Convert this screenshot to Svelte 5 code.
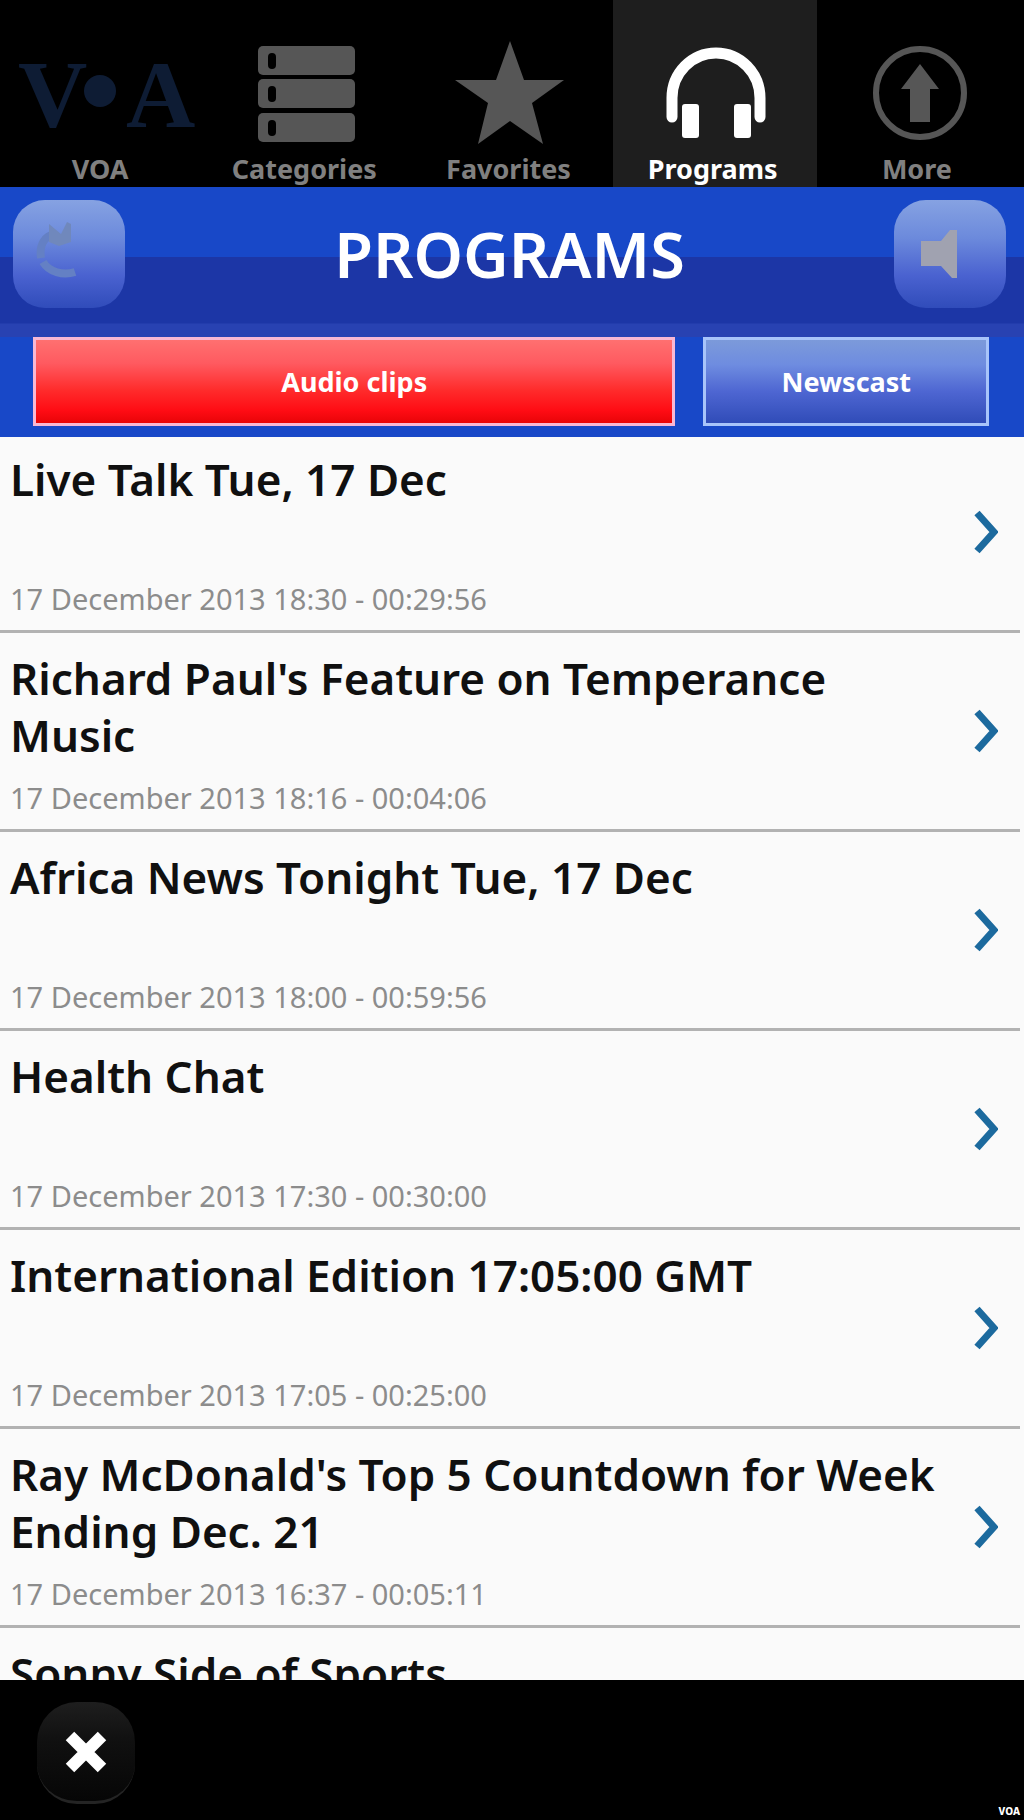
<script lang="ts">
	const tabs = ['VOA', 'Categories', 'Favorites', 'Programs', 'More']
	let active = $state('Programs')

	const filters = ['Audio clips', 'Newscast']
	let filter = $state('Audio clips')

	const clips = [
		{ title: 'Live Talk Tue, 17 Dec', meta: '17 December 2013 18:30 - 00:29:56' },
		{ title: "Richard Paul's Feature on Temperance Music", meta: '17 December 2013 18:16 - 00:04:06' },
		{ title: 'Africa News Tonight Tue, 17 Dec', meta: '17 December 2013 18:00 - 00:59:56' },
		{ title: 'Health Chat', meta: '17 December 2013 17:30 - 00:30:00' },
		{ title: 'International Edition 17:05:00 GMT', meta: '17 December 2013 17:05 - 00:25:00' },
		{ title: "Ray McDonald's Top 5 Countdown for Week Ending Dec. 21", meta: '17 December 2013 16:37 - 00:05:11' },
		{ title: 'Sonny Side of Sports', meta: '' }
	]
</script>

<svelte:head>
	<title>VOA Programs</title>
</svelte:head>

<div class="app">
	<nav>
		{#each tabs as tab}
			<button class="tab" class:active={active === tab} onclick={() => { active = tab }}>
				<svg viewBox="0 0 200 108" aria-hidden="true">
					{#if tab === 'VOA'}
						<g class="logo">
							<text x="16" y="87">V</text>
							<circle cx="98" cy="51" r="16" />
							<text x="124" y="87">A</text>
						</g>
					{:else if tab === 'Categories'}
						{#each [6, 39, 73] as y}
							<rect x="52" {y} width="97" height="29" rx="5" />
							<rect class="hole" x="62" y={y + 7} width="8" height="16" rx="4" />
						{/each}
					{:else if tab === 'Favorites'}
						<path d="M100 1L114 40L154 40L122 63L133 104L100 81L68 104L78 63L45 40L86 40Z" />
					{:else if tab === 'Programs'}
						<path class="band" d="M57 77V58a43.500 44.500 0 0 1 88 0V77" />
						<rect x="67" y="64" width="17" height="34" rx="3" />
						<rect x="119" y="64" width="17" height="34" rx="3" />
					{:else}
						<circle class="ring" cx="101" cy="53" r="44" />
						<path d="M101 24L120 49H111V82H91V49H82Z" />
					{/if}
				</svg>
				<span>{tab}</span>
			</button>
		{/each}
	</nav>

	<header>
		<div class="bar">
			<button class="tool" aria-label="Refresh">
				<svg viewBox="0 0 112 108" aria-hidden="true">
					<path class="faint" d="M28 58C26 44 32 36 42 34" />
					<path class="mark" d="M36 24L48 34L54 22L58 24V42L46 46L36 42Z" />
					<path class="faint" d="M30 62C36 72 50 76 62 72" />
				</svg>
			</button>
			<h1>PROGRAMS</h1>
			<button class="tool" aria-label="Sound">
				<svg viewBox="0 0 112 108" aria-hidden="true">
					<path class="speaker" d="M27 41H47L56 30H63V78H58L47 66H27Z" />
				</svg>
			</button>
		</div>
		<div class="filters">
			{#each filters as name}
				<button class:selected={filter === name} onclick={() => { filter = name }}>{name}</button>
			{/each}
		</div>
	</header>

	<main>
		<ul>
			{#each clips as clip}
				<li>
					<a href="#clip">
						<div class="text">
							<h2>{clip.title}</h2>
							<p>{clip.meta}</p>
						</div>
						<svg class="chevron" viewBox="0 0 24 44" aria-hidden="true">
							<path d="M3 3L20 22L3 41" />
						</svg>
					</a>
				</li>
			{/each}
		</ul>
	</main>

	<footer>
		<button class="close" aria-label="Close">
			<svg viewBox="0 0 42 42" aria-hidden="true">
				<path d="M5 5L37 37M37 5L5 37" />
			</svg>
		</button>
		<small>VOA</small>
	</footer>
</div>

<style>
	:global(body) {
		margin: 0;
		background: #000;
	}

	.app {
		display: flex;
		flex-direction: column;
		height: 100vh;
		font-family: "Noto Sans", "Open Sans", sans-serif;
	}

	button {
		border: 0;
		padding: 0;
		font-family: inherit;
		cursor: pointer;
	}

	nav {
		display: grid;
		grid-template-columns: repeat(5, 1fr);
		padding-right: 3px;
		background: #000;
	}

	.tab {
		display: flex;
		flex-direction: column;
		align-items: center;
		gap: 3px;
		padding-top: 40px;
		background: #000;
		color: #808080;
		fill: #565656;
		font-size: 27px;
		font-weight: 700;
		line-height: 36px;

		& svg {
			width: 200px;
			max-width: 100%;
			height: 108px;
			overflow: visible;
		}

		& span {
			padding-right: 4px;
		}

		& .hole {
			fill: #000;
		}

		& .ring {
			fill: none;
			stroke: #565656;
			stroke-width: 6;
		}
	}

	.tab.active {
		background: #1e1e1e;
		color: #fff;
		fill: #fff;
	}

	.band {
		fill: none;
		stroke: #fff;
		stroke-width: 11;
		stroke-linecap: round;
	}

	.logo {
		fill: #0e1c34;
		font-family: "Liberation Serif", serif;
		font-size: 96px;
		font-weight: 700;
	}

	header {
		background: #1848c8;
	}

	.bar {
		display: flex;
		align-items: center;
		justify-content: space-between;
		padding: 13px 18px 29px 13px;
		background: linear-gradient(#1848c8 70px, #1c36a6 70px, #1c36a6 136px, #2842b2 137px, #2842b2 149px);
	}

	h1 {
		margin: 0;
		color: #fff;
		font-size: 63px;
		font-weight: 600;
		line-height: 108px;
	}

	.tool {
		width: 112px;
		height: 108px;
		border-radius: 32px;
		background: linear-gradient(#86a2e2, #6c8adc 35%, #4a62d0 70%, #304cba);

		& svg {
			display: block;
		}
	}

	.mark {
		fill: #7088bc;
	}

	.faint {
		fill: none;
		stroke: #6480c4;
		stroke-width: 8;
	}

	.speaker {
		fill: #a0a2b0;
	}

	.filters {
		display: grid;
		grid-template-columns: 9fr 4fr;
		gap: 28px;
		padding: 0 35px 11px 33px;

		& button {
			height: 89px;
			border: 3px solid #a8c4fa;
			background: linear-gradient(#7c9ada, #6e8ce0 30%, #4e66d2 62%, #304cb8);
			color: #fff;
			font-size: 27px;
			font-weight: 700;
		}

		& .selected {
			border-color: #f8b8d4;
			background: linear-gradient(#ff7070, #ff5a60 28%, #ff2c2c 60%, #ff0c14 85%, #e80408);
		}
	}

	main {
		flex: 1;
		min-height: 0;
		overflow: hidden;
		background: #fafafa;
	}

	ul {
		margin: 0;
		padding: 0;
		list-style: none;
	}

	li {
		margin-right: 4px;
		border-bottom: 3px solid #b2b2b2;
	}

	a {
		display: flex;
		align-items: center;
		justify-content: space-between;
		gap: 26px;
		padding: 17px 22px 13px 10px;
		color: #101010;
		text-decoration: none;
	}

	li:first-child a {
		padding-top: 14px;
	}

	h2 {
		margin: 0;
		min-height: 114px;
		font-size: 44px;
		font-weight: 600;
		line-height: 57px;
	}

	p {
		margin: 16px 0 0;
		min-height: 36px;
		color: #8c8c8c;
		font-size: 29px;
		line-height: 36px;
	}

	.chevron {
		flex: none;
		width: 24px;
		height: 44px;
		margin-bottom: 4px;
		fill: none;
		stroke: #1c6a9e;
		stroke-width: 7;
	}

	footer {
		box-sizing: border-box;
		display: flex;
		align-items: center;
		justify-content: space-between;
		height: 140px;
		padding: 6px 4px 0 37px;
		background: #000;
		color: #fff;
	}

	.close {
		display: grid;
		place-items: center;
		width: 98px;
		height: 102px;
		border-bottom: 3px solid #242424;
		border-radius: 40px;
		background: linear-gradient(#1e1e1e, #101010 40%, #060606);

		& svg {
			width: 42px;
			height: 42px;
			fill: none;
			stroke: #fff;
			stroke-width: 12;
		}
	}

	small {
		align-self: flex-end;
		font-size: 10px;
		font-weight: 800;
		line-height: 18px;
	}
</style>
